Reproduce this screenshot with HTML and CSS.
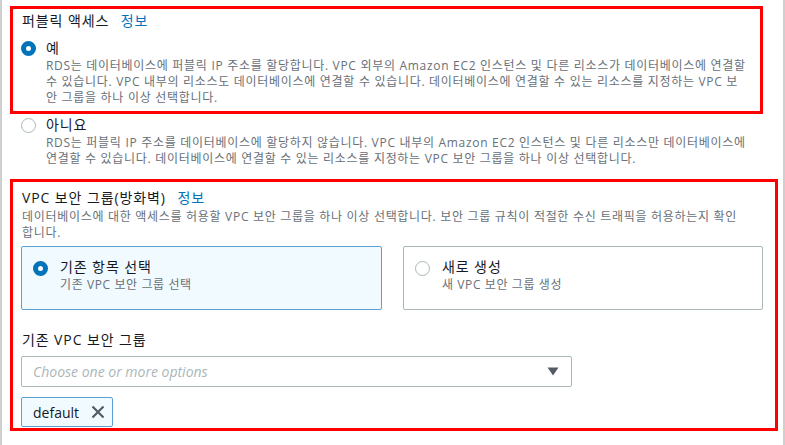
FILE: index.html
```html
<!DOCTYPE html>
<html lang="ko">
<head>
<meta charset="utf-8">
<link rel="stylesheet" href="styles.css">
</head>
<body>
<div class="page">
  <section class="mark mark-public">
    <div class="field-title">퍼블릭 액세스 <a class="info">정보</a></div>
    <div class="option">
      <span class="radio checked"></span>
      <div class="option-body">
        <div class="option-label">예</div>
        <div class="option-desc">RDS는 데이터베이스에 퍼블릭 IP 주소를 할당합니다. VPC 외부의 Amazon EC2 인스턴스 및 다른 리소스가 데이터베이스에 연결할<br>수 있습니다. VPC 내부의 리소스도 데이터베이스에 연결할 수 있습니다. 데이터베이스에 연결할 수 있는 리소스를 지정하는 VPC 보<br>안 그룹을 하나 이상 선택합니다.</div>
      </div>
    </div>
  </section>

  <div class="option option-no">
    <span class="radio"></span>
    <div class="option-body">
      <div class="option-label">아니요</div>
      <div class="option-desc">RDS는 퍼블릭 IP 주소를 데이터베이스에 할당하지 않습니다. VPC 내부의 Amazon EC2 인스턴스 및 다른 리소스만 데이터베이스에<br>연결할 수 있습니다. 데이터베이스에 연결할 수 있는 리소스를 지정하는 VPC 보안 그룹을 하나 이상 선택합니다.</div>
    </div>
  </div>

  <section class="mark mark-vpc">
    <div class="field-title">VPC 보안 그룹(방화벽) <a class="info">정보</a></div>
    <div class="field-desc">데이터베이스에 대한 액세스를 허용할 VPC 보안 그룹을 하나 이상 선택합니다. 보안 그룹 규칙이 적절한 수신 트래픽을 허용하는지 확인<br>합니다.</div>

    <div class="tiles">
      <div class="tile selected">
        <span class="radio checked"></span>
        <div class="tile-body">
          <div class="tile-title">기존 항목 선택</div>
          <div class="tile-sub">기존 VPC 보안 그룹 선택</div>
        </div>
      </div>
      <div class="tile">
        <span class="radio"></span>
        <div class="tile-body">
          <div class="tile-title">새로 생성</div>
          <div class="tile-sub">새 VPC 보안 그룹 생성</div>
        </div>
      </div>
    </div>

    <div class="field-label">기존 VPC 보안 그룹</div>
    <div class="select">
      <span class="placeholder">Choose one or more options</span>
      <svg class="caret" width="12" height="9" viewBox="0 0 12 9"><path d="M0.5 0.5 H11.5 L6 8.5 Z" fill="#545b64"/></svg>
    </div>

    <div class="token">
      <span class="token-text">default</span>
      <svg class="token-x" width="14" height="14" viewBox="0 0 14 14"><path d="M1.5 1.5 L12.5 12.5 M12.5 1.5 L1.5 12.5" stroke="#545b64" stroke-width="2.2" fill="none"/></svg>
    </div>
  </section>
</div>
</body>
</html>
```

FILE: styles.css
```css
* { box-sizing: border-box; }
html, body { margin: 0; padding: 0; background: #fff; }
body {
  font-family: "Open Sans", "Noto Sans CJK KR", sans-serif;
  color: #16191f;
}
.page {
  width: 785px;
  height: 445px;
  border-left: 2px solid #cfcfcf;
  border-right: 2px solid #cfcfcf;
  padding: 6px 0 0 8px;
  overflow: hidden;
}
.mark {
  border: 3px solid #ff0000;
}
.mark-public {
  width: 753px;
  padding: 1px 8px 5px 9px;
}
.mark-vpc {
  width: 768px;
  margin-top: 12px;
  padding: 5px 12px 1px 8px;
}
.field-title {
  font-size: 14px;
  line-height: 22px;
  letter-spacing: 0.9px;
  color: #16191f;
}
.mark-vpc .field-title { padding-left: 1px; }
.info {
  color: #0073bb;
  margin-left: 7px;
  text-decoration: none;
}
.option {
  display: flex;
  align-items: flex-start;
  margin-top: 6px;
  margin-left: -1px;
}
.option-no {
  margin-top: 1px;
  margin-left: 11px;
}
.radio {
  flex: none;
  width: 15px;
  height: 15px;
  border-radius: 50%;
  border: 1.5px solid #aab7b8;
  background: #fff;
  margin-top: 3px;
}
.radio.checked {
  border: 5px solid #0073bb;
}
.option-body { margin-left: 10px; }
.option-label {
  font-size: 14px;
  line-height: 20px;
  letter-spacing: 0.9px;
}
.option-desc, .field-desc {
  font-size: 12px;
  line-height: 16px;
  letter-spacing: 0.7px;
  color: #687078;
  white-space: nowrap;
}
.field-desc { padding-left: 1px; }
.tiles {
  display: grid;
  grid-template-columns: 361px 360px;
  column-gap: 21px;
  margin-top: 5px;
}
.tile {
  display: flex;
  align-items: flex-start;
  height: 64px;
  border: 1px solid #aab7b8;
  border-radius: 2px;
  padding: 14px 10px 0 11px;
  background: #fff;
}
.tile.selected {
  border-color: #5aa0d2;
  background: #f1faff;
}
.tile .radio { margin-top: 0; }
.tile-body { margin-left: 12px; margin-top: -4px; }
.tile-title {
  font-size: 14px;
  line-height: 20px;
  letter-spacing: 0.9px;
}
.tile-sub {
  font-size: 12px;
  line-height: 16px;
  letter-spacing: 0.6px;
  color: #687078;
}
.field-label {
  font-size: 14px;
  line-height: 22px;
  letter-spacing: 0.9px;
  margin-top: 19px;
  padding-left: 1px;
}
.select {
  display: flex;
  align-items: center;
  justify-content: space-between;
  width: 551px;
  height: 31px;
  margin-top: 5px;
  border: 1px solid #aab7b8;
  border-radius: 2px;
  padding: 0 12px 0 11px;
}
.placeholder {
  font-size: 14px;
  font-style: italic;
  color: #aab7b8;
}
.caret { display: block; }
.token {
  display: inline-flex;
  align-items: center;
  height: 30px;
  width: 92px;
  margin-top: 10px;
  border: 1px solid #5aa0d2;
  border-radius: 2px;
  background: #f1faff;
  padding: 0 0 0 11px;
}
.token-text {
  font-size: 14px;
  color: #16191f;
}
.token-x {
  display: block;
  margin-left: 12px;
}
```
